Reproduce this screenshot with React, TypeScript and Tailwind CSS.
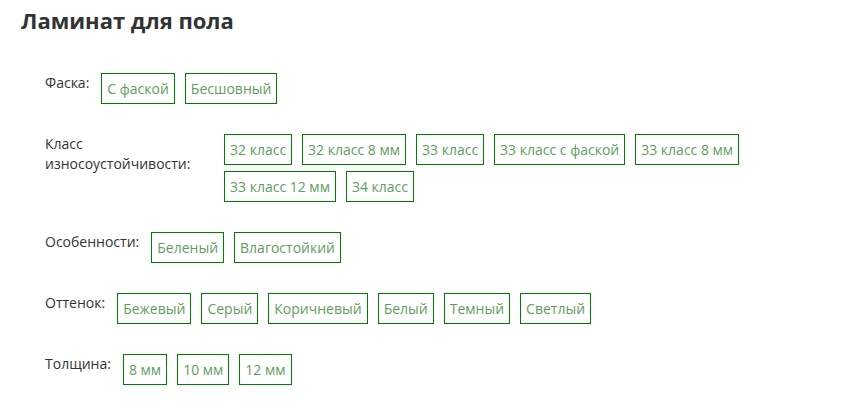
const filters = [
  { label: "Фаска:", items: ["С фаской", "Бесшовный"] },
  {
    label: "Класс износоустойчивости:",
    items: [
      "32 класс",
      "32 класс 8 мм",
      "33 класс",
      "33 класс с фаской",
      "33 класс 8 мм",
      "33 класс 12 мм",
      "34 класс",
    ],
  },
  { label: "Особенности:", items: ["Беленый", "Влагостойкий"] },
  {
    label: "Оттенок:",
    items: ["Бежевый", "Серый", "Коричневый", "Белый", "Темный", "Светлый"],
  },
  { label: "Толщина:", items: ["8 мм", "10 мм", "12 мм"] },
];

const App = () => {
  return (
    <div className="min-h-screen bg-white pl-[21px] pr-[21px] pt-[5px] font-['Open_Sans',sans-serif] text-[#333]">
      {/* Title */}
      <h1 className="text-[22px] font-bold leading-[30px] text-[#333]">Ламинат для пола</h1>

      {/* Filters */}
      <div className="mt-[38px] flex flex-col gap-[30px] pl-[24px]">
        {filters.map((f) => (
          <div key={f.label} className="flex items-start gap-[12px]">
            <div className="max-w-[167px] shrink-0 text-[14px] leading-[20px] text-[#333]">{f.label}</div>
            <div className="flex flex-wrap gap-x-[10px] gap-y-[6px]">
              {f.items.map((item) => (
                <a
                  key={item}
                  href="#"
                  className="flex h-[31px] items-center border border-[#008000] px-[5px] text-[14px] text-[#5f9e5f] hover:text-[#008000]"
                >
                  {item}
                </a>
              ))}
            </div>
          </div>
        ))}
      </div>
    </div>
  );
};

export default App;
